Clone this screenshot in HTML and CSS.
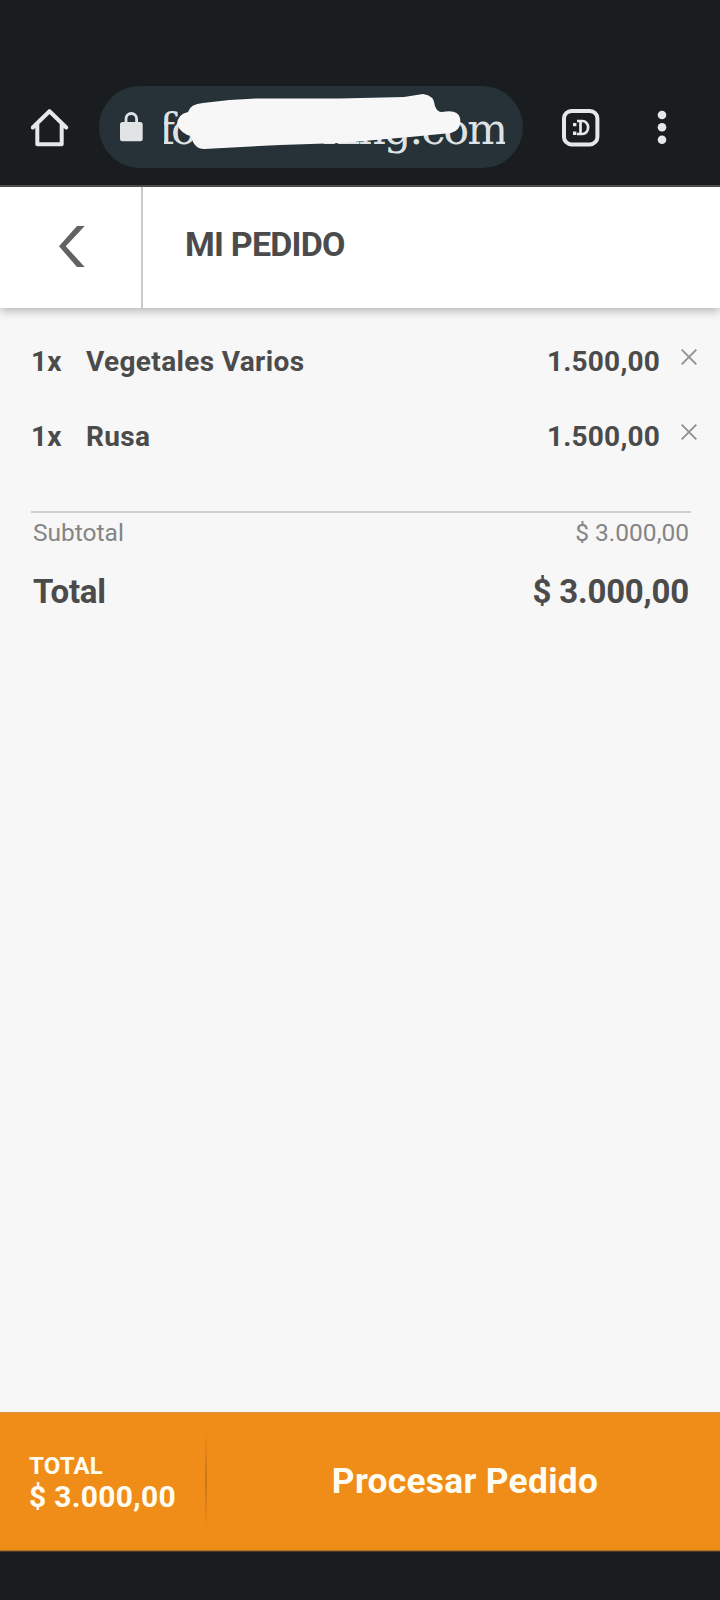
FILE: index.html
```html
<!DOCTYPE html>
<html lang="es">
<head>
<meta charset="utf-8">
<title>Mi pedido</title>
<link rel="stylesheet" href="styles.css">
</head>
<body>
<div class="browser">
  <svg class="home" viewBox="0 0 38 38"><path d="M1.8 18.5 18.5 2.2 35.2 18.5M6.3 15V35.2H30.7V15" fill="none" stroke="#e6e7e9" stroke-width="4" stroke-linejoin="round" stroke-linecap="round"/></svg>
  <div class="address">
    <svg class="lock" viewBox="0 0 23 30"><rect x="0" y="10" width="22.7" height="19.3" rx="2.5" fill="#e2e3e5"/><path d="M6 11V6.8a5.3 5.3 0 0 1 10.6 0V11" fill="none" stroke="#e2e3e5" stroke-width="2.8"/></svg>
    <div class="url"><span class="url-start">fo</span><span class="url-end">king.com</span></div>
    <svg class="scribble" viewBox="177 93 284 57"><path d="M177 124Q178 114 188 112Q190 104 203 103Q230 99 258 98.5H340L404 97L423 94Q434 95 435 106Q437 112 442 112Q458 109 460 118Q462 130 451 133L410 137L340 143L280 145L204 149Q194 149 191 136Q181 134 177 124Z" fill="#f7f7f7"/></svg>
  </div>
  <svg class="tabs" viewBox="0 0 38 38"><rect x="2" y="2" width="33.4" height="33.4" rx="7.5" fill="none" stroke="#e6e7e9" stroke-width="4"/><path d="M11 14h3.4v3.2H11zM11 22.5h3.4V26H11z" fill="#e6e7e9"/><path d="M15 12h5.5a5.6 6.5 0 0 1 0 13H15M18.5 12v13" fill="none" stroke="#e6e7e9" stroke-width="2.7"/></svg>
  <svg class="menu" viewBox="0 0 10 36"><g fill="#e6e7e9"><circle cx="5" cy="5" r="4.3"/><circle cx="5" cy="17.3" r="4.3"/><circle cx="5" cy="29.7" r="4.3"/></g></svg>
</div>
<header class="header">
  <div class="back"><svg class="chevron" viewBox="0 0 26 41"><path d="M18 0H25.7L6.8 20.3 25.7 41H18L0 20.3Z" fill="#626262"/></svg></div>
  <h1 class="title">MI PEDIDO</h1>
</header>
<main class="order">
  <div class="item"><span class="qty">1x</span><span class="name">Vegetales Varios</span><span class="price">1.500,00</span><svg class="remove" viewBox="0 0 16 16"><path d="M.7.7 15.3 15.3M15.3.7.7 15.3" stroke="#929292" stroke-width="1.9"/></svg></div>
  <div class="item"><span class="qty">1x</span><span class="name">Rusa</span><span class="price">1.500,00</span><svg class="remove" viewBox="0 0 16 16"><path d="M.7.7 15.3 15.3M15.3.7.7 15.3" stroke="#929292" stroke-width="1.9"/></svg></div>
  <section class="summary">
    <div class="subtotal"><span>Subtotal</span><span>$ 3.000,00</span></div>
    <div class="total"><span>Total</span><span class="total-amount">$ 3.000,00</span></div>
  </section>
</main>
<footer class="footer">
  <div class="footer-total"><span class="label">TOTAL</span><span class="amount">$ 3.000,00</span></div>
  <div class="divider"></div>
  <div class="process"><span>Procesar Pedido</span></div>
</footer>
<div class="navbar"></div>
</body>
</html>
```

FILE: styles.css
```css
* { box-sizing: border-box; }
body { margin: 0; width: 720px; height: 1600px; display: flex; flex-direction: column; overflow: hidden; background: #f7f7f7; color: #4b4b4b; font-family: Roboto, sans-serif; }
svg { display: block; flex: none; }
.browser { height: 187px; flex: none; display: flex; align-items: flex-start; background: #1a1d20; border-bottom: 2px solid #515253; padding-top: 86px; }
.home { width: 38px; height: 38px; margin: 23px 0 0 31px; }
.address { position: relative; width: 424px; height: 82px; margin-left: 30px; border-radius: 41px; background: #263138; display: flex; }
.lock { width: 23px; height: 30px; margin: 26px 0 0 21px; }
.url { width: 341px; margin-left: 21px; overflow: hidden; display: flex; justify-content: space-between; font: 43px/86px "DejaVu Serif", serif; color: #dfe2e5; white-space: nowrap; }
.url-start { margin-left: -5px; letter-spacing: -4px; }
.url-end { letter-spacing: -2px; margin-right: -1px; }
.scribble { position: absolute; left: 78px; top: 7px; width: 284px; height: 57px; }
.tabs { width: 38px; height: 38px; margin: 23px 0 0 39px; }
.menu { width: 10px; height: 36px; margin: 24px 0 0 57px; }
.header { height: 121px; flex: none; position: relative; display: flex; background: #fff; box-shadow: 0 3px 9px rgba(0,0,0,.27); }
.back { width: 143px; border-right: 2px solid #c9c9c9; padding: 39px 0 0 59px; }
.chevron { width: 26px; height: 41px; }
.title { margin: 37px 0 0 42px; font-size: 34px; line-height: 40px; font-weight: 700; letter-spacing: -.8px; }
.order { flex: 1; padding-top: 34px; }
.item { display: flex; height: 75px; padding: 0 22px 0 31px; font-size: 28px; line-height: 40px; font-weight: 700; letter-spacing: .2px; }
.qty { width: 55px; }
.name { flex: 1; letter-spacing: .35px; }
.remove { width: 16px; height: 16px; margin: 6.5px 1px 0 21px; }
.summary { margin: 19px 29px 0 31px; border-top: 2px solid #cecece; }
.subtotal, .total { display: flex; justify-content: space-between; padding: 0 2px; }
.subtotal { font-size: 24.5px; line-height: 40px; color: #858585; }
.total { font-size: 33px; line-height: 40px; font-weight: 700; margin-top: 19px; letter-spacing: -.2px; }
.footer { height: 139px; flex: none; display: flex; background: #f08c18; border-top: 1px solid #d99343; border-bottom: 1px solid #ad7126; color: #fffdf2; font-weight: 700; }
.footer-total { width: 205px; padding: 37px 0 0 29px; display: flex; flex-direction: column; }
.label { font-size: 24px; line-height: 32px; letter-spacing: .2px; }
.amount { font-size: 30px; line-height: 30px; letter-spacing: .3px; }
.divider { width: 2px; height: 98px; margin-top: 19px; background: linear-gradient(transparent, #c97617 50%, transparent); }
.process { flex: 1; text-align: center; font-size: 35.3px; line-height: 40px; padding: 48px 0 0 3px; letter-spacing: .3px; }
.navbar { height: 49px; flex: none; background: #1a1d20; border-top: 1px solid #4d3a26; }
```
